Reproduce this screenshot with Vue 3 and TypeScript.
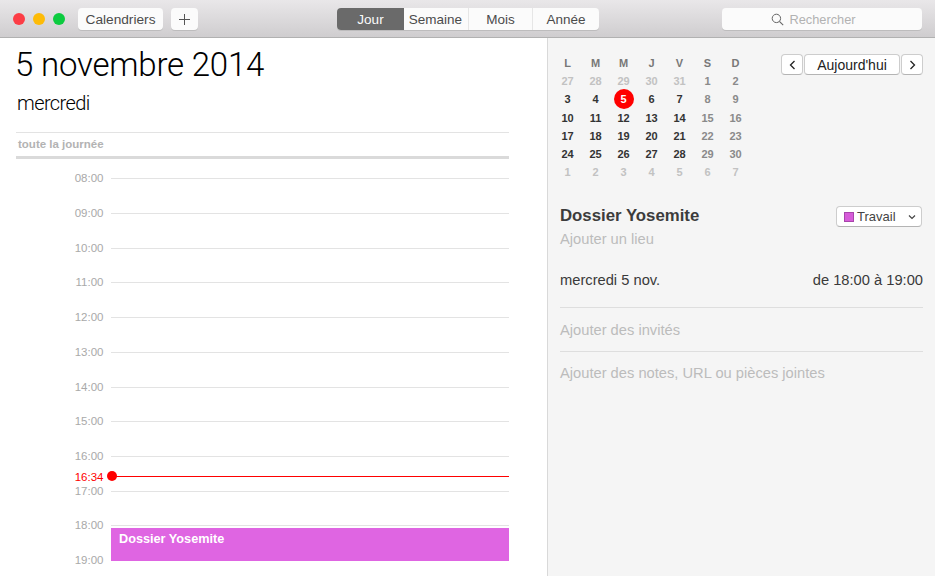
<script setup lang="ts">
const hours: string[] = ['08:00','09:00','10:00','11:00','12:00','13:00','14:00','15:00','16:00','17:00','18:00','19:00']
const days: string[] = ['L','M','M','J','V','S','D']
interface Cell { n: number; cls: string }
const nums: number[] = [27,28,29,30,31,1,2,3,4,5,6,7,8,9,10,11,12,13,14,15,16,17,18,19,20,21,22,23,24,25,26,27,28,29,30,1,2,3,4,5,6,7]
const cells: Cell[] = nums.map((n, i) => {
  let cls = 'cur'
  if (i < 5 || i >= 35) cls = 'out'
  else if (n === 5) cls = 'today'
  else if (i % 7 >= 5) cls = 'we'
  return { n, cls }
})
const tabs: string[] = ['Jour','Semaine','Mois','Année']
</script>

<template>
  <div class="win">
    <header class="bar">
      <div class="lights">
        <i class="l r"></i><i class="l y"></i><i class="l g"></i>
      </div>
      <button class="tb cal">Calendriers</button>
      <button class="tb plus" aria-label="Ajouter">
        <svg width="13" height="13" viewBox="0 0 13 13"><path d="M6.5 1v11M1 6.5h11" stroke="#555" stroke-width="1" fill="none"/></svg>
      </button>
      <div class="seg">
        <span v-for="(t, i) in tabs" :key="t" class="tab" :class="{ on: i === 0 }">{{ t }}</span>
      </div>
      <div class="search">
        <svg width="13" height="13" viewBox="0 0 13 13"><circle cx="5.4" cy="5.4" r="4.2" stroke="#666" stroke-width="1" fill="none"/><path d="M8.4 8.4l3.8 3.8" stroke="#666" stroke-width="1.1"/></svg>
        <span>Rechercher</span>
      </div>
    </header>
    <main class="body">
      <section class="left">
        <h1>5 novembre 2014</h1>
        <h2>mercredi</h2>
        <div class="allday">toute la journée</div>
        <div class="grid">
          <div v-for="h in hours" :key="h" class="hour">
            <span class="lab">{{ h }}</span><span class="line"></span>
          </div>
          <div class="now">
            <span class="nowlab">16:34</span><i class="dot"></i><span class="nowline"></span>
          </div>
          <div class="event">Dossier Yosemite</div>
        </div>
      </section>
      <aside class="right">
        <div class="top">
          <div class="mini">
            <span v-for="(d, i) in days" :key="i" class="dh">{{ d }}</span>
            <span v-for="(c, i) in cells" :key="'c' + i" class="dc" :class="c.cls"><b>{{ c.n }}</b></span>
          </div>
          <div class="nav">
            <button class="nb arrow"><svg width="7" height="10" viewBox="0 0 7 10"><path d="M5.5 1L1.5 5l4 4" stroke="#222" stroke-width="1.3" fill="none"/></svg></button>
            <button class="nb today-b">Aujourd'hui</button>
            <button class="nb arrow"><svg width="7" height="10" viewBox="0 0 7 10"><path d="M1.5 1l4 4-4 4" stroke="#222" stroke-width="1.3" fill="none"/></svg></button>
          </div>
        </div>
        <div class="titlerow">
          <span class="evt">Dossier Yosemite</span>
          <div class="pop">
            <i class="sw"></i><span>Travail</span>
            <svg width="8" height="6" viewBox="0 0 8 6"><path d="M1 1.5l3 3 3-3" stroke="#444" stroke-width="1.2" fill="none"/></svg>
          </div>
        </div>
        <div class="ph loc">Ajouter un lieu</div>
        <div class="when"><span>mercredi 5 nov.</span><span>de 18:00 à 19:00</span></div>
        <div class="ph inv">Ajouter des invités</div>
        <div class="ph notes">Ajouter des notes, URL ou pièces jointes</div>
      </aside>
    </main>
  </div>
</template>

<style>
html, body { margin: 0; padding: 0; background: #fff; }
</style>

<style scoped>
.win { width: 935px; height: 576px; overflow: hidden; display: flex; flex-direction: column; font-family: "Liberation Sans", Arial, sans-serif; color: #222; }
.bar { height: 37px; flex: none; display: flex; align-items: flex-start; background: linear-gradient(#e9e7e9, #cfcdcf); border-bottom: 1px solid #b1b1b1; }
.lights { display: flex; gap: 8px; margin: 13px 0 0 13px; }
.l { display: block; width: 12px; height: 12px; border-radius: 50%; }
.r { background: #fc3d46; } .y { background: #fdbb07; } .g { background: #0ccb3f; }
button { font-family: inherit; padding: 0; margin: 0; border: 0; }
.tb { height: 22px; margin-top: 8px; background: #fbfbfb; border-radius: 4px; box-shadow: 0 1px 0 #bdbcbd; color: #4b4b4b; font-size: 13.7px; display: flex; align-items: center; justify-content: center; }
.cal { width: 85px; margin-left: 13px; }
.plus { width: 27px; margin-left: 8px; }
.seg { display: flex; margin: 8px 0 0 139px; height: 22px; border-radius: 4px; background: #fbfbfb; box-shadow: 0 1px 0 #bdbcbd; overflow: hidden; }
.tab { width: 64px; display: flex; align-items: center; justify-content: center; font-size: 13.5px; color: #4b4b4b; border-left: 1px solid #e6e6e6; box-sizing: border-box; }
.tab:first-child { width: 67px; border-left: 0; }
.tab:nth-child(2) { border-left: 0; padding-right: 1px; }
.tab:last-child { width: 67px; }
.tab.on { background: #6a6a6a; color: #fbfbfb; }
.search { width: 200px; height: 22px; margin: 8px 0 0 123px; padding-right: 17px; box-sizing: border-box; border-radius: 4px; background: #fbfbfb; box-shadow: 0 1px 0 #bdbcbd; display: flex; align-items: center; justify-content: center; gap: 5px; color: #b2b2b2; font-size: 12.8px; }
.body { flex: 1; display: flex; min-height: 0; }
.left { width: 547px; flex: none; padding: 0 38px 0 16px; box-sizing: border-box; }
h1 { margin: 6px 0 0 -1px; font-size: 33px; line-height: 42px; font-weight: 300; font-family: Roboto, "Liberation Sans", sans-serif; color: #000; letter-spacing: -0.2px; }
h2 { margin: 4px 0 0 1px; font-size: 20px; line-height: 26px; font-weight: 300; font-family: Roboto, "Liberation Sans", sans-serif; color: #000; letter-spacing: -0.6px; }
.allday { margin-top: 16px; height: 23px; border-top: 1px solid #e3e3e3; border-bottom: 3px solid #dadada; font-size: 11.5px; line-height: 23px; font-weight: 700; color: #b3b3b3; padding-left: 2px; }
.grid { position: relative; margin-top: 19.2px; }
.hour { height: 34.73px; display: flex; align-items: flex-start; }
.lab { width: 87.5px; flex: none; margin-top: -6px; font-size: 11.5px; line-height: 13px; color: #a9a9a9; text-align: right; }
.line { margin-left: 7.5px; flex: 1; border-top: 1px solid #e3e3e3; }
.now { position: absolute; left: 0; right: 0; top: 292px; height: 12px; }
.nowlab { position: absolute; right: 405.5px; top: 1px; font-size: 11.5px; line-height: 13px; color: #f00; background: #fff; }
.dot { position: absolute; left: 91px; top: 1px; width: 10px; height: 10px; border-radius: 50%; background: #f00; }
.nowline { position: absolute; left: 95px; right: 0; top: 6px; height: 1px; background: #f00; }
.event { position: absolute; left: 95px; right: 0; top: 350px; height: 33px; background: #df65e2; color: #fff; font-size: 12.7px; font-weight: 700; line-height: 13px; padding: 5px 0 0 8px; box-sizing: border-box; }
.right { flex: 1; background: #f5f5f5; border-left: 1px solid #d9d9d9; padding: 0 12px; position: relative; }
.top { height: 140px; position: relative; }
.mini { position: absolute; left: -6.5px; top: 16px; display: grid; grid-template-columns: repeat(7, 28px); grid-auto-rows: 18.2px; }
.dh { font-size: 11px; font-weight: 700; color: #787878; text-align: center; line-height: 18px; }
.dc { display: flex; align-items: center; justify-content: center; font-size: 11px; }
.dc b { display: block; font-weight: 700; width: 20px; height: 20px; line-height: 20px; text-align: center; border-radius: 50%; }
.cur { color: #333; }
.we { color: #8a8a8a; }
.out { color: #c2c2c2; }
.today b { background: #f00; color: #fff; }
.nav { position: absolute; right: 0; top: 16px; display: flex; gap: 1px; }
.nb { height: 21px; box-sizing: border-box; background: #fff; border-radius: 4px; border: 1px solid #cdcdcd; border-bottom-color: #b4b4b4; display: flex; align-items: center; justify-content: center; color: #222; font-size: 14px; }
.arrow { width: 22px; }
.today-b { width: 96px; }
.titlerow { display: flex; justify-content: space-between; align-items: flex-start; margin-top: 28px; height: 21px; padding-right: 1px; }
.evt { font-size: 16.8px; font-weight: 700; color: #3c3c3c; line-height: 19px; }
.pop { width: 86px; height: 21px; box-sizing: border-box; background: #fff; border-radius: 4px; border: 1px solid #cdcdcd; border-bottom-color: #b4b4b4; display: flex; align-items: center; padding: 0 5px 0 7px; font-size: 13px; color: #444; }
.sw { width: 8px; height: 8px; background: #d65cd9; border: .5px solid #a845ab; margin-right: 3px; flex: none; }
.pop svg { margin-left: auto; }
.ph { color: #bcbcbc; font-size: 14.7px; }
.loc { margin-top: 2px; line-height: 20px; }
.when { display: flex; justify-content: space-between; margin-top: 21px; font-size: 14.7px; line-height: 20px; color: #3a3a3a; height: 37px; border-bottom: 1px solid #dedede; }
.inv { line-height: 20px; padding: 12px 0 11px; border-bottom: 1px solid #dedede; }
.notes { line-height: 20px; margin-top: 11px; }
</style>
